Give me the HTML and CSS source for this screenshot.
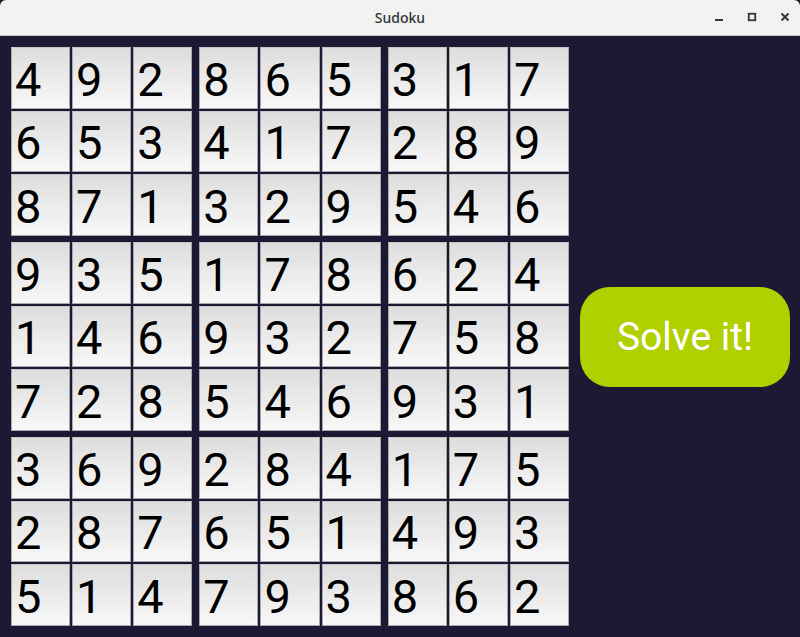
FILE: index.html
```html
<!DOCTYPE html>
<html>
<head>
<meta charset="utf-8">
<link rel="stylesheet" href="styles.css">
</head>
<body>
<div class="window">
  <header class="titlebar">
    <span class="title">Sudoku</span>
    <div class="controls">
      <span class="ctl"><svg width="10" height="10" viewBox="0 0 10 10"><rect x="1" y="7" width="8" height="2" fill="#2e3436"/></svg></span>
      <span class="ctl"><svg width="10" height="10" viewBox="0 0 10 10"><rect x="1.75" y="1.75" width="6.5" height="6.5" fill="none" stroke="#2e3436" stroke-width="1.8"/></svg></span>
      <span class="ctl"><svg width="10" height="10" viewBox="0 0 10 10"><path d="M1.5 1.5 L8.5 8.5 M8.5 1.5 L1.5 8.5" stroke="#2e3436" stroke-width="1.8"/></svg></span>
    </div>
  </header>
  <main class="content">
    <div class="board">
      <div class="block"><div class="cell">4</div><div class="cell">9</div><div class="cell">2</div><div class="cell">6</div><div class="cell">5</div><div class="cell">3</div><div class="cell">8</div><div class="cell">7</div><div class="cell">1</div></div>
      <div class="block"><div class="cell">8</div><div class="cell">6</div><div class="cell">5</div><div class="cell">4</div><div class="cell">1</div><div class="cell">7</div><div class="cell">3</div><div class="cell">2</div><div class="cell">9</div></div>
      <div class="block"><div class="cell">3</div><div class="cell">1</div><div class="cell">7</div><div class="cell">2</div><div class="cell">8</div><div class="cell">9</div><div class="cell">5</div><div class="cell">4</div><div class="cell">6</div></div>
      <div class="block"><div class="cell">9</div><div class="cell">3</div><div class="cell">5</div><div class="cell">1</div><div class="cell">4</div><div class="cell">6</div><div class="cell">7</div><div class="cell">2</div><div class="cell">8</div></div>
      <div class="block"><div class="cell">1</div><div class="cell">7</div><div class="cell">8</div><div class="cell">9</div><div class="cell">3</div><div class="cell">2</div><div class="cell">5</div><div class="cell">4</div><div class="cell">6</div></div>
      <div class="block"><div class="cell">6</div><div class="cell">2</div><div class="cell">4</div><div class="cell">7</div><div class="cell">5</div><div class="cell">8</div><div class="cell">9</div><div class="cell">3</div><div class="cell">1</div></div>
      <div class="block"><div class="cell">3</div><div class="cell">6</div><div class="cell">9</div><div class="cell">2</div><div class="cell">8</div><div class="cell">7</div><div class="cell">5</div><div class="cell">1</div><div class="cell">4</div></div>
      <div class="block"><div class="cell">2</div><div class="cell">8</div><div class="cell">4</div><div class="cell">6</div><div class="cell">5</div><div class="cell">1</div><div class="cell">7</div><div class="cell">9</div><div class="cell">3</div></div>
      <div class="block"><div class="cell">1</div><div class="cell">7</div><div class="cell">5</div><div class="cell">4</div><div class="cell">9</div><div class="cell">3</div><div class="cell">8</div><div class="cell">6</div><div class="cell">2</div></div>
    </div>
    <div class="side">
      <button class="solve">Solve it!</button>
    </div>
  </main>
</div>
</body>
</html>
```
FILE: styles.css
```css
* { box-sizing: border-box; }
html, body { margin: 0; padding: 0; }
body { width: 800px; height: 637px; overflow: hidden; background: #1b1934; }
.window { width: 800px; height: 637px; display: flex; flex-direction: column; }
.titlebar {
  height: 36px;
  flex: none;
  background: #f2f2f2;
  border-bottom: 1px solid #c4c4c4;
  border-radius: 6px 6px 0 0;
  display: flex;
  align-items: center;
  justify-content: center;
  position: relative;
}
.title {
  font-family: "Noto Sans", "DejaVu Sans", sans-serif;
  font-size: 14px;
  font-weight: 500;
  color: #2e3436;
}
.controls {
  position: absolute;
  right: 10px;
  top: 12px;
  display: flex;
  gap: 23px;
}
.ctl { width: 10px; height: 10px; display: block; }
.ctl svg { display: block; }
.content {
  flex: 1;
  display: flex;
  padding: 11px 0 11px 11px;
  background: #1b1934;
}
.board {
  width: 558px;
  height: 579px;
  display: grid;
  grid-template-columns: repeat(3, 1fr);
  grid-template-rows: repeat(3, 1fr);
  column-gap: 7px;
  row-gap: 6px;
}
.block {
  display: grid;
  grid-template-columns: repeat(3, 1fr);
  grid-template-rows: repeat(3, 1fr);
  gap: 2px;
}
.cell {
  background: linear-gradient(to bottom, #dddddd, #f8f8f8);
  border: 1px solid #a9a9a9;
  border-top-color: #c8c8c8;
  font-family: Roboto, "Liberation Sans", sans-serif;
  font-size: 47px;
  color: #000;
  display: flex;
  align-items: center;
  padding-left: 3px;
  padding-top: 3px;
  line-height: 1;
}
.side {
  flex: 1;
  display: flex;
  align-items: center;
  justify-content: center;
}
.solve {
  width: 210px;
  height: 100px;
  border: none;
  border-radius: 30px;
  background: #b1d000;
  color: #fff;
  font-family: Roboto, "Liberation Sans", sans-serif;
  font-size: 39px;
  padding: 0;
  margin-left: 1px;
}
```
